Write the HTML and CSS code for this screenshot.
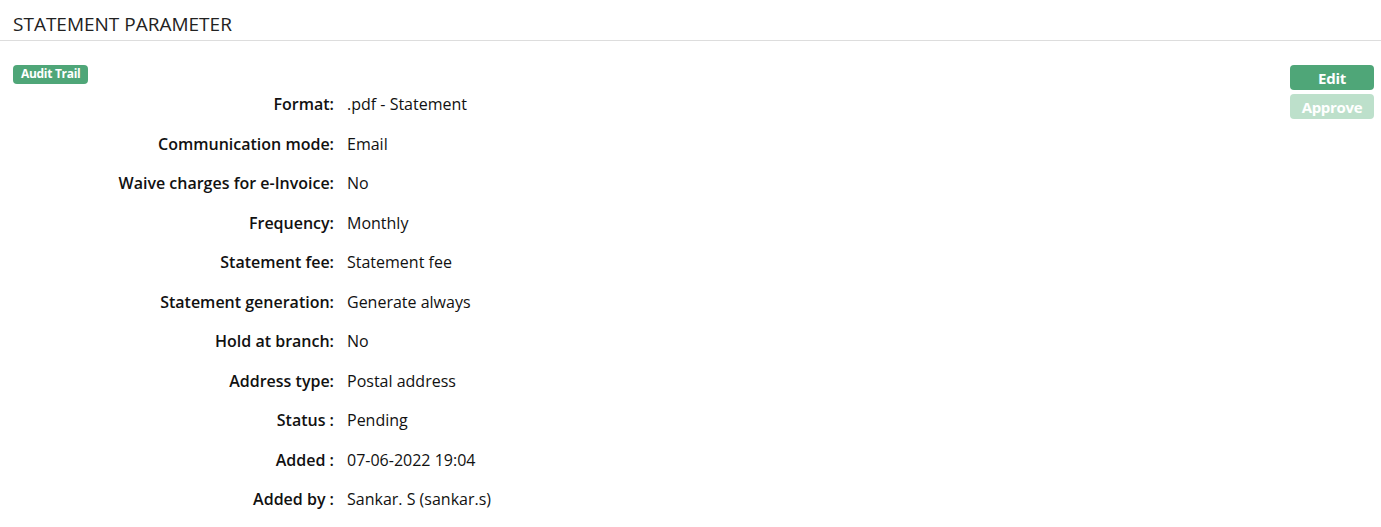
FILE: index.html
```html
<!DOCTYPE html>
<html lang="en">
<head>
    <meta charset="UTF-8">
    <title>Statement Parameter</title>
    <link rel="stylesheet" href="styles.css">
</head>
<body>
    <div class="page-header">
        <h2>STATEMENT PARAMETER</h2>
    </div>
    <div class="panel">
        <div class="panel-top">
            <span class="badge">Audit Trail</span>
            <div class="actions">
                <button class="btn">Edit</button>
                <button class="btn disabled" disabled>Approve</button>
            </div>
        </div>
        <dl class="details">
            <dt>Format:</dt><dd>.pdf - Statement</dd>
            <dt>Communication mode:</dt><dd>Email</dd>
            <dt>Waive charges for e-Invoice:</dt><dd>No</dd>
            <dt>Frequency:</dt><dd>Monthly</dd>
            <dt>Statement fee:</dt><dd>Statement fee</dd>
            <dt>Statement generation:</dt><dd>Generate always</dd>
            <dt>Hold at branch:</dt><dd>No</dd>
            <dt>Address type:</dt><dd>Postal address</dd>
            <dt>Status :</dt><dd>Pending</dd>
            <dt>Added :</dt><dd>07-06-2022 19:04</dd>
            <dt>Added by :</dt><dd>Sankar. S (sankar.s)</dd>
        </dl>
    </div>
</body>
</html>
```

FILE: styles.css
```css
body {
    margin: 0;
    font-family: "Open Sans", sans-serif;
    background-color: #fff;
    color: #111;
}
.page-header {
    border-bottom: 1px solid #ddd;
    padding: 13px 13px 5px;
}
.page-header h2 {
    margin: 0;
    font-size: 19px;
    font-weight: 400;
    color: #222;
    line-height: 22px;
}
.panel {
    padding: 24px 7px 0 13px;
}
.panel-top {
    display: flex;
    justify-content: space-between;
    align-items: flex-start;
    height: 0;
}
.badge {
    background-color: #4fa678;
    color: #fff;
    font-size: 12px;
    font-weight: 700;
    padding: 1px 8px 2px;
    border-radius: 4px;
    line-height: 16px;
    letter-spacing: -0.3px;
}
.actions {
    display: flex;
    flex-direction: column;
    gap: 4px;
}
.btn {
    width: 84px;
    height: 25px;
    border: none;
    border-radius: 4px;
    background-color: #4fa678;
    color: #fff;
    font-family: inherit;
    font-size: 15px;
    font-weight: 700;
    letter-spacing: -0.3px;
    cursor: pointer;
}
.btn.disabled {
    background-color: #bde0cb;
    cursor: default;
}
.details {
    display: grid;
    grid-template-columns: 321px 1fr;
    column-gap: 13px;
    margin: 0;
    padding-top: 20px;
    font-size: 16px;
    line-height: 39.5px;
}
.details dt {
    text-align: right;
    font-weight: 600;
}
.details dd {
    margin: 0;
}
```
